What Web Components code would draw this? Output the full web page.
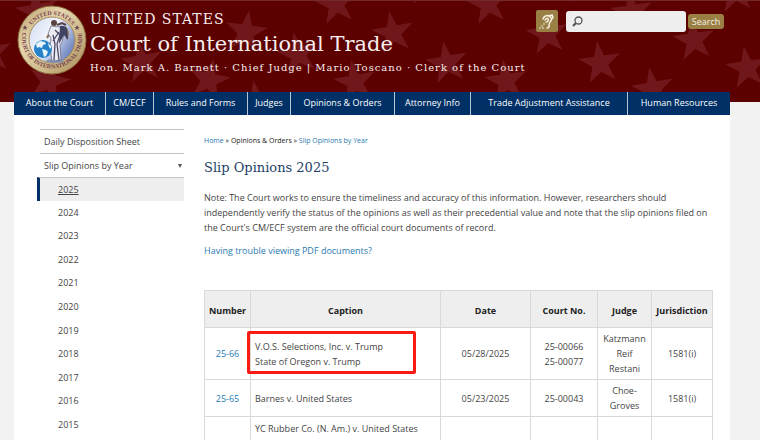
<!DOCTYPE html>
<html lang="en">
<head>
<meta charset="utf-8">
<meta name="viewport" content="width=device-width, initial-scale=1">
<title>Slip Opinions 2025 | Court of International Trade</title>
<style>
:root {
    --maroon: #5c0000;
    --star: #6f171a;
    --navy: #003066;
    --gold: #9a8045;
    --link: #2a7ab0;
    --text: #444;
    --serif: "DejaVu Serif", serif;
}
html, body {
    height: 100%;
}
body {
    margin: 0;
    overflow: hidden;
    background-color: #f2f2f2;
    color: var(--text);
    font-family: "Open Sans", sans-serif;
    font-size: 9px;
    line-height: 15px;
}
</style>
</head>
<body>
<court-page>
    <court-header slot="header"></court-header>
    <court-nav slot="nav"></court-nav>
    <year-menu slot="side"></year-menu>
    <slip-opinions slot="main"></slip-opinions>
</court-page>

<script>
const define = (name, html, setup) => {
    const template = document.createElement('template');
    template.innerHTML = html;

    customElements.define(name, class extends HTMLElement {
        constructor() {
            super();
            this.attachShadow({ mode: 'open' });
            this.shadowRoot.appendChild(template.content.cloneNode(true));
            if (setup) setup(this.shadowRoot);
        }
    });
};

define('court-page', `
<style>
:host {
    display: flex;
    flex-direction: column;
    min-height: 100%;
}
.sheet {
    flex: 1;
    margin: -10px 30px 0 14px;
    background-color: #fff;
    position: relative;
}
.columns {
    display: flex;
    gap: 20px;
    padding: 14px 17px 0 23px;
}
.side {
    flex: 0 0 147px;
}
main {
    flex: 1;
    min-width: 0;
}
</style>
<slot name="header"></slot>
<div class="sheet">
    <slot name="nav"></slot>
    <div class="columns">
        <div class="side"><slot name="side"></slot></div>
        <main><slot name="main"></slot></main>
    </div>
</div>
`);

define('star-field', `
<style>
:host {
    display: block;
    position: absolute;
    inset: 0;
    overflow: hidden;
}
svg {
    display: block;
    width: 100%;
    height: 100%;
    fill: var(--star);
}
</style>
<svg aria-hidden="true">
    <defs>
        <polygon id="star" points="0,-22 5,-7 21,-7 8,3 13,18 0,9 -13,18 -8,3 -21,-7 -5,-7"/>
    </defs>
</svg>
`, root => {
    // x, y, turn
    const stars = [
        [-9, 52, -8], [37, 10, -10], [49, 80, 14], [142, 61, -10], [209, 79, 12],
        [246, 31, 8], [298, 53, -12], [336, 3, -10], [393, 32, -10], [447, 62, -10],
        [355, 81, -10], [257, 101, -10], [424, -17, -8], [488, 3, -10], [506, 80, -8],
        [547, 33, -8], [600, 62, -8], [583, -18, -8], [632, 11, -8], [694, 39, -8],
        [653, 88, -10], [559, 111, -8], [747, 67, -8], [735, -9, -8]
    ];
    const svg = root.querySelector('svg');
    stars.forEach(([x, y, turn]) => {
        const use = document.createElementNS('http://www.w3.org/2000/svg', 'use');
        use.setAttribute('href', '#star');
        use.setAttribute('transform', `translate(${x} ${y}) rotate(${turn})`);
        svg.appendChild(use);
    });
});

define('court-seal', `
<style>
:host {
    display: block;
    width: 70px;
    height: 70px;
}
svg {
    display: block;
}
text {
    font: bold 6px "Liberation Serif", serif;
    fill: #76404a;
}
</style>
<svg width="70" height="70" viewBox="0 0 70 70" role="img" aria-label="Seal of the court">
    <defs>
        <linearGradient id="rim" x1="0" y1="0" x2="1" y2="1">
            <stop offset="0" stop-color="#b79a66"/>
            <stop offset=".35" stop-color="#e6d6b0"/>
            <stop offset=".65" stop-color="#cdb98a"/>
            <stop offset="1" stop-color="#a98a55"/>
        </linearGradient>
        <linearGradient id="sky" x1="0" y1="0" x2="1" y2=".6">
            <stop offset="0" stop-color="#cfd9f0"/>
            <stop offset=".5" stop-color="#f2f5fc"/>
            <stop offset="1" stop-color="#6f86c0"/>
        </linearGradient>
        <path id="arc-top" d="M10 35a25 25 0 0 1 50 0"/>
        <path id="arc-bottom" d="M5.500 28a30 30 0 1 0 59 0"/>
    </defs>
    <circle cx="35" cy="35" r="34" fill="url(#rim)" stroke="#8e7040"/>
    <circle cx="35" cy="35" r="23" fill="url(#sky)" stroke="#a58a58"/>
    <text text-anchor="middle"><textPath href="#arc-top" startOffset="50%">UNITED STATES</textPath></text>
    <text text-anchor="middle"><textPath href="#arc-bottom" startOffset="50%">COURT OF INTERNATIONAL TRADE</textPath></text>
    <path d="M8 20l1 2h2l-2 1 1 2-2-1-2 1 1-2-2-1h2zM60 20l1 2h2l-2 1 1 2-2-1-2 1 1-2-2-1h2z" fill="#6b4a50"/>
    <ellipse cx="38" cy="56" rx="9" ry="2" fill="#8792b0"/>
    <path d="M35 24l-5 9M48 22q4 4 2 12" fill="none" stroke="#84654f" stroke-width="2"/>
    <path d="M34 21l9 1 4 7-2 8-2 3 1 15-9 1-2-14 1-9-3-4z" fill="#eceaf2" stroke="#4b4a68" stroke-width=".6"/>
    <path d="M38 25l5 5-3 9 2 16M36 30l2 9-1 16M42 27l-6 9" fill="none" stroke="#4a4864" stroke-width="1.300"/>
    <path d="M43 21q5-1 7 3l1 11-4-5-5 9z" fill="#3f4262"/>
    <circle cx="37" cy="18" r="3" fill="#5b4343"/>
    <path d="M40 20l5-2 4 2" fill="none" stroke="#55424a" stroke-width="2"/>
    <circle cx="26" cy="44" r="9" fill="#2682c8"/>
    <path d="M19 39l4-3 5 1 1 2-3 1-1 3-3-1-2 1zM25 44l4 1 2 2-2 4-2 1-1-4zM31 38l3 3v3l-2-2z" fill="#e8f5fb"/>
</svg>
`);

define('court-header', `
<style>
:host {
    display: block;
    position: relative;
    background-color: var(--maroon);
    border-top: 1px solid #74292b;
    color: #f6eeee;
}
header {
    position: relative;
    display: flex;
    align-items: flex-start;
    padding: 4px 36px 0 17px;
    height: 97px;
}
a.home {
    flex: 1;
    display: flex;
    gap: 3px;
    color: inherit;
    text-decoration: none;
    font-family: var(--serif);
    white-space: nowrap;
}
.united {
    display: block;
    margin-top: 4px;
    font-size: 14px;
    line-height: 20px;
    letter-spacing: 1px;
}
.court {
    display: block;
    font-size: 21px;
    line-height: 30px;
}
.judges {
    display: block;
    font-size: 10px;
    line-height: 18px;
    letter-spacing: 1px;
}
form {
    display: flex;
    align-items: center;
    margin-top: 5px;
}
.access {
    display: flex;
    width: 22px;
    height: 22px;
    margin-right: 8px;
    border-radius: 2px;
    background-color: var(--gold);
}
.field {
    display: flex;
    align-items: center;
    width: 120px;
    height: 21px;
    box-sizing: border-box;
    border-radius: 3px;
    background-color: #eee;
}
.field svg {
    flex: none;
    margin-left: 6px;
}
input {
    flex: 1;
    min-width: 0;
    border: 0;
    outline: 0;
    background: none;
    font: inherit;
}
button {
    margin-left: 2px;
    padding: 0;
    width: 36px;
    height: 15px;
    border: 0;
    border-radius: 3px;
    background-color: var(--gold);
    color: #f4efe2;
    font: 9px/15px "Open Sans", sans-serif;
}
</style>
<star-field></star-field>
<header>
    <a class="home" href="#">
        <court-seal></court-seal>
        <span>
            <span class="united">UNITED STATES</span>
            <span class="court">Court of International Trade</span>
            <span class="judges">Hon. Mark A. Barnett · Chief Judge | Mario Toscano · Clerk of the Court</span>
        </span>
    </a>
    <form role="search">
        <a class="access" href="#" aria-label="Hearing access">
            <svg width="22" height="22" viewBox="0 0 22 22" fill="none" stroke="#f7f2e4" stroke-width="1.500" stroke-linecap="round">
                <path d="M7 9C8 6 11 5 13 6c3 1 3 4 1 6-1 2-1 2-1 4 0 1-1 2-2 2"/>
                <path d="M9 10c1-2 3-2 3-1 1 1 0 2-1 3"/>
                <path d="M13 6l3-1 1 2-1 2"/>
                <path d="M4 18h0M6 16h0M8 14h0M10 12h0M7 18h0" stroke-width="1.600"/>
            </svg>
        </a>
        <div class="field">
            <svg width="11" height="11" viewBox="0 0 11 11" fill="none" stroke="#555" aria-hidden="true">
                <circle cx="6.500" cy="4.500" r="3.500" stroke-width="1.300"/>
                <path d="M4 7L1 10" stroke-width="2.200"/>
            </svg>
            <input type="text" aria-label="Search terms">
        </div>
        <button type="button">Search</button>
    </form>
</header>
`);

define('court-nav', `
<style>
:host {
    display: block;
}
nav {
    display: grid;
    grid-template-columns: 91fr 48fr 94fr 43fr 104fr 76fr 157fr 103fr;
    background-color: var(--navy);
}
a {
    border-left: 1px solid #b8c6d6;
    color: #fff;
    line-height: 22px;
    padding-bottom: 1px;
    text-align: center;
    text-decoration: none;
    white-space: nowrap;
}
a:first-child {
    border-left: 0;
}
</style>
<nav>
    <a href="#">About the Court</a>
    <a href="#">CM/ECF</a>
    <a href="#">Rules and Forms</a>
    <a href="#">Judges</a>
    <a href="#">Opinions &amp; Orders</a>
    <a href="#">Attorney Info</a>
    <a href="#">Trade Adjustment Assistance</a>
    <a href="#">Human Resources</a>
</nav>
`);

define('year-menu', `
<style>
:host {
    display: block;
}
ul {
    margin: 0;
    padding: 0;
    list-style: none;
}
a {
    color: inherit;
    text-decoration: none;
}
.top {
    margin-left: 3px;
}
.top a {
    display: flex;
    justify-content: space-between;
    align-items: center;
    padding: 0 2px 0 4px;
    border-top: 1px solid #c4c4c4;
    line-height: 23px;
}
.arrow {
    width: 0;
    border: 2px solid transparent;
    border-top: 4px solid #555;
    border-bottom: 0;
}
.years {
    display: grid;
    grid-auto-rows: 1fr;
    height: 259px;
}
.years a {
    display: flex;
    align-items: center;
    height: 100%;
    padding-left: 21px;
}
.years .current {
    box-sizing: border-box;
    border-left: 3px solid var(--navy);
    border-top: 1px solid #c4c4c4;
    padding-left: 18px;
    background-color: #eee;
    text-decoration: underline;
}
</style>
<nav>
    <ul class="top">
        <li><a href="#">Daily Disposition Sheet</a></li>
        <li><a href="#">Slip Opinions by Year <span class="arrow"></span></a></li>
    </ul>
    <ul class="years"></ul>
</nav>
`, root => {
    const years = root.querySelector('.years');
    for (let year = 2025; year >= 2015; year--) {
        years.innerHTML += `<li><a href="#"${year === 2025 ? ' class="current"' : ''}>${year}</a></li>`;
    }
});

define('slip-opinions', `
<style>
:host {
    display: block;
}
a {
    color: var(--link);
    text-decoration: none;
}
.crumbs {
    padding-top: 4px;
    color: #222;
    font-size: 7px;
}
h1 {
    margin: 10px 0 12px;
    color: #1d3f68;
    font: 13px/20px var(--serif);
}
p {
    margin: 0 0 8px;
}
table {
    width: 100%;
    margin-top: 32px;
    border-collapse: collapse;
    table-layout: fixed;
}
th, td {
    padding: 3px 4px;
    border: 1px solid #d9d9d9;
    text-align: center;
}
th {
    height: 30px;
    padding: 4px 0 2px;
    background-color: #eee;
    color: #222;
}
td:nth-child(2) {
    text-align: left;
}
tr:last-child td {
    height: 60px;
    padding-top: 4px;
    vertical-align: top;
}
td.marked {
    position: relative;
}
/* red outline drawn over the cell, past its left edge */
.marked::after {
    content: "";
    position: absolute;
    top: 3px;
    bottom: 5px;
    left: -4px;
    right: 24px;
    border: 3px solid #fb1b12;
    border-radius: 2px;
}
</style>
<div class="crumbs"><a href="#">Home</a> » Opinions &amp; Orders » <a href="#">Slip Opinions by Year</a></div>
<h1>Slip Opinions 2025</h1>
<p>Note: The Court works to ensure the timeliness and accuracy of this information. However, researchers should independently verify the status of the opinions as well as their precedential value and note that the slip opinions filed on the Court's CM/ECF system are the official court documents of record.</p>
<p><a href="#">Having trouble viewing PDF documents?</a></p>
<table>
    <colgroup>
        <col style="width: 46px">
        <col>
        <col style="width: 90px">
        <col style="width: 67px">
        <col style="width: 54px">
        <col style="width: 61px">
    </colgroup>
    <thead>
        <tr><th>Number</th><th>Caption</th><th>Date</th><th>Court No.</th><th>Judge</th><th>Jurisdiction</th></tr>
    </thead>
    <tbody>
        <tr>
            <td><a href="#">25-66</a></td>
            <td class="marked">V.O.S. Selections, Inc. v. Trump<br>State of Oregon v. Trump</td>
            <td>05/28/2025</td>
            <td>25-00066<br>25-00077</td>
            <td>Katzmann<br>Reif<br>Restani</td>
            <td>1581(i)</td>
        </tr>
        <tr>
            <td><a href="#">25-65</a></td>
            <td>Barnes v. United States</td>
            <td>05/23/2025</td>
            <td>25-00043</td>
            <td>Choe-<wbr>Groves</td>
            <td>1581(i)</td>
        </tr>
        <tr>
            <td></td>
            <td>YC Rubber Co. (N. Am.) v. United States</td>
            <td></td>
            <td></td>
            <td></td>
            <td></td>
        </tr>
    </tbody>
</table>
`);
</script>
</body>
</html>
